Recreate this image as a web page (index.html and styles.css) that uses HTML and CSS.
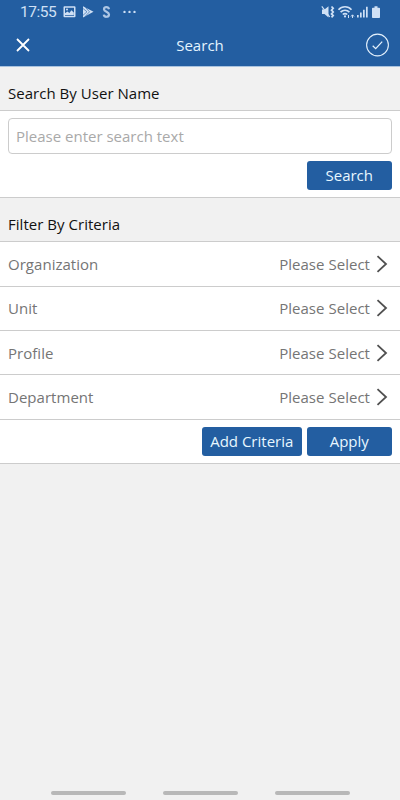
FILE: index.html
```html
<!DOCTYPE html>
<html lang="en">
  <head>
    <meta charset="UTF-8" />
    <meta name="viewport" content="width=device-width, initial-scale=1" />
    <title>Search</title>
    <link rel="stylesheet" href="styles.css">
  </head>
  <body>
    <header class="top">
      <div class="status-bar">
        <span class="clock">17:55</span>
        <svg class="status-left" width="80" height="14" viewBox="0 0 80 14">
          <path fill-rule="evenodd" d="M2.500 1.300h10a1 1 0 0 1 1 1v9a1 1 0 0 1-1 1h-10a1 1 0 0 1-1-1v-9a1 1 0 0 1 1-1zM3 2.800v7.900h9V2.800z"/>
          <path d="M3 9.900V8.300l2.400-1.700 2 1.300 2-2.700 2.400 2.200v2.500z"/>
          <circle cx="5" cy="4.600" r="1"/>
          <path d="M21 1.300l10.500 5.500L21 12.500z"/>
          <path d="M21 3.500l4 3.300-4 3.500M23.500 2.500l4 4.300-4 4.300" fill="none" stroke="#235ea1" stroke-width=".6"/>
          <path d="M47 4.200C46.500 1.300 41.800 1.500 42 4.300c.2 2.500 5 2.600 5 5.200 0 3-5 3-5.200.2" fill="none" stroke="#cfe0f5" stroke-width="2.200" stroke-opacity=".8"/>
          <circle cx="62.500" cy="6.900" r="1.200"/>
          <circle cx="67.500" cy="6.900" r="1.200"/>
          <circle cx="72.500" cy="6.900" r="1.200"/>
        </svg>
        <svg class="status-right" width="62" height="14" viewBox="0 0 62 14">
          <!-- muted, vibrate -->
          <path d="M2 4.500h2.500L8.500 1.300v11.200L4.500 9H2z"/>
          <path d="M1.800 1.300l8 10.700" stroke="#cfe0f5" stroke-width="1.200"/>
          <path d="M11.500 1.500l1.700 1.800-1.700 1.900L13.200 7l-1.700 1.900 1.700 1.700-1.700 1.800" fill="none" stroke="#cfe0f5" stroke-width="1.700"/>
          <!-- wifi -->
          <path d="M18.500 4.700c3.500-3.900 9.500-3.900 13 0M20.600 7.200c2.500-2.600 6.300-2.600 8.800 0M22.800 9.500c1.300-1.300 3.100-1.300 4.400 0" fill="none" stroke="#cfe0f5" stroke-width="1.700"/>
          <circle cx="25" cy="11.400" r="1.100"/>
          <path d="M28.500 10v3M32.500 13v-3M31 11.500l1.500-1.700 1.500 1.700" fill="none" stroke="#cfe0f5"/>
          <!-- signal -->
          <path d="M37 10h1.700v2.500H37zM40 7.500h1.700v5H40zM43 4.800h1.700v7.700H43zM46 1.800h1.700v10.700H46z"/>
          <!-- battery -->
          <path d="M54.500 1.200h3v1.500h1.700a.8.800 0 0 1 .8.800v8.700a.8.800 0 0 1-.8.800h-6.400a.8.800 0 0 1-.8-.8V3.500a.8.800 0 0 1 .8-.8h1.700z"/>
        </svg>
      </div>
      <div class="nav-bar">
        <button class="icon-button" aria-label="Close">
          <svg width="14" height="14" viewBox="0 0 14 14">
            <path d="M1 1l12 12M13 1L1 13" fill="none" stroke="#fff" stroke-width="1.800"/>
          </svg>
        </button>
        <h1 class="nav-title">Search</h1>
        <button class="icon-button" aria-label="Done">
          <svg width="24" height="24" viewBox="0 0 24 24" fill="none" stroke="#e4f1fc">
            <circle cx="12.500" cy="12" r="10.900" stroke-width="1.100"/>
            <path d="M7.700 12.700l3 2.900 6.500-7" stroke-width="1.300"/>
          </svg>
        </button>
      </div>
    </header>

    <h2 class="section-title">Search By User Name</h2>
    <form class="search-form" onsubmit="event.preventDefault();">
      <input class="search-input" type="text" placeholder="Please enter search text" />
      <div class="button-row">
        <button class="button" type="submit">Search</button>
      </div>
    </form>

    <h2 class="section-title filter-title">Filter By Criteria</h2>
    <ul class="criteria">
      <li class="criteria-row">
        <span class="criteria-name">Organization</span>
        <span>Please Select</span>
        <svg class="chevron" width="12" height="18" viewBox="0 0 12 18"><path d="M1.500 1.200l8.500 7.800-8.500 7.800"/></svg>
      </li>
      <li class="criteria-row">
        <span class="criteria-name">Unit</span>
        <span>Please Select</span>
        <svg class="chevron" width="12" height="18" viewBox="0 0 12 18"><path d="M1.500 1.200l8.500 7.800-8.500 7.800"/></svg>
      </li>
      <li class="criteria-row">
        <span class="criteria-name">Profile</span>
        <span>Please Select</span>
        <svg class="chevron" width="12" height="18" viewBox="0 0 12 18"><path d="M1.500 1.200l8.500 7.800-8.500 7.800"/></svg>
      </li>
      <li class="criteria-row">
        <span class="criteria-name">Department</span>
        <span>Please Select</span>
        <svg class="chevron" width="12" height="18" viewBox="0 0 12 18"><path d="M1.500 1.200l8.500 7.800-8.500 7.800"/></svg>
      </li>
    </ul>
    <div class="button-row filter-actions">
      <button class="button button-wide">Add Criteria</button>
      <button class="button">Apply</button>
    </div>

    <!-- Android gesture hints -->
    <div class="gesture-bar">
      <span class="gesture"></span>
      <span class="gesture"></span>
      <span class="gesture"></span>
    </div>
  </body>
</html>
```
FILE: styles.css
```css
* {
  box-sizing: border-box;
}
body {
  font-family: "Open Sans", sans-serif;
  font-size: 15px;
  letter-spacing: 0.03px;
  background: #f1f1f1;
  color: #111;
  display: flex;
  flex-direction: column;
  height: 100vh;
  margin: 0;
}

/* Blue header */
.top {
  background: #235ea1;
  height: 67px;
  border-bottom: 1px solid #a9c3df;
}
.status-bar {
  display: flex;
  align-items: center;
  height: 24px;
  padding: 0 18px 0 20px;
  color: #cfe0f5;
  fill: #cfe0f5;
}
.clock {
  font-family: Roboto, sans-serif;
  font-size: 15.5px;
  letter-spacing: -0.45px;
  width: 42px;
  white-space: nowrap;
}
.status-right {
  margin-left: auto;
}
.nav-bar {
  display: flex;
  align-items: center;
  justify-content: space-between;
  height: 42px;
  padding: 0 11px 0 16px;
}
.nav-title {
  margin: 0;
  padding: 0 0 1px 5px;
  font-size: 15px;
  font-weight: normal;
  color: #e4f4ff;
}
.icon-button {
  display: flex;
  padding: 0;
  border: none;
  background: none;
}

.section-title {
  margin: 0;
  padding: 16px 8px 0;
  height: 44px;
  font-size: 15px;
  line-height: 20px;
  font-weight: normal;
  border-bottom: 1px solid #ccc;
}
.filter-title {
  height: 44.3px;
}

.search-form {
  height: 87px;
  padding: 7px 8px;
  background: #fff;
  border-bottom: 1px solid #ccc;
}
.search-input {
  display: block;
  width: 100%;
  height: 36px;
  padding: 0 7px;
  font-family: inherit;
  font-size: 15px;
  border: 1px solid #ccc;
  border-radius: 4px;
}
.search-input::placeholder {
  color: #a9a9a9;
}
.button-row {
  display: flex;
  justify-content: flex-end;
  gap: 5px;
  padding-top: 7px;
}
.button {
  width: 85.5px;
  height: 29px;
  padding: 0 0 1px;
  font-family: inherit;
  font-size: 15px;
  color: #e8f7ff;
  background: #235ea1;
  border: none;
  border-radius: 3px;
}
.button-wide {
  width: 99.5px;
}

.criteria {
  list-style: none;
  margin: 0;
  padding: 0;
  background: #fff;
  color: #757575;
}
.criteria-row {
  display: flex;
  align-items: center;
  height: 44.35px;
  padding: 0 12px 0 8px;
  border-bottom: 1px solid #ccc;
}
.criteria-name {
  margin-right: auto;
}
.chevron {
  margin-left: 6px;
  fill: none;
  stroke: #505050;
  stroke-width: 1.8;
}
.filter-actions {
  height: 44px;
  padding: 7px 8px;
  background: #fff;
  border-bottom: 1px solid #ccc;
}

.gesture-bar {
  display: flex;
  justify-content: center;
  gap: 37px;
  margin-top: auto;
  padding-bottom: 5px;
}
.gesture {
  width: 75px;
  height: 4px;
  border-radius: 2px;
  background: #b8b8b8;
}
```
